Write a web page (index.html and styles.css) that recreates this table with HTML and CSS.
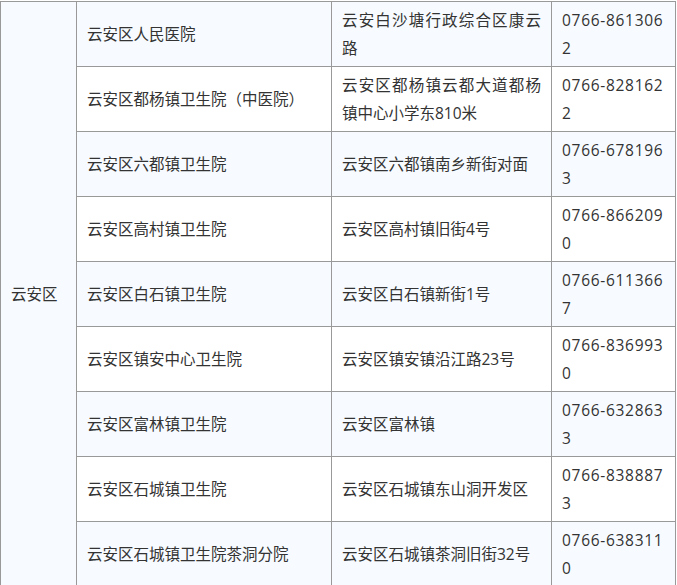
FILE: index.html
```html
<!DOCTYPE html>
<html lang="zh-CN">
<head>
<meta charset="utf-8">
<title>云安区医院列表</title>
<link rel="stylesheet" href="styles.css">
</head>
<body>
<table class="hosp">
  <colgroup>
    <col class="c-area">
    <col class="c-name">
    <col class="c-addr">
    <col class="c-tel">
  </colgroup>
  <tbody>
    <tr class="odd">
      <td class="area" rowspan="9">云安区</td>
      <td>云安区人民医院</td>
      <td class="addr">云安白沙塘行政综合区康云路</td>
      <td class="tel">0766-8613062</td>
    </tr>
    <tr>
      <td>云安区都杨镇卫生院（中医院）</td>
      <td class="addr">云安区都杨镇云都大道都杨镇中心小学东810米</td>
      <td class="tel">0766-8281622</td>
    </tr>
    <tr class="odd">
      <td>云安区六都镇卫生院</td>
      <td class="addr">云安区六都镇南乡新街对面</td>
      <td class="tel">0766-6781963</td>
    </tr>
    <tr>
      <td>云安区高村镇卫生院</td>
      <td class="addr">云安区高村镇旧街4号</td>
      <td class="tel">0766-8662090</td>
    </tr>
    <tr class="odd">
      <td>云安区白石镇卫生院</td>
      <td class="addr">云安区白石镇新街1号</td>
      <td class="tel">0766-6113667</td>
    </tr>
    <tr>
      <td>云安区镇安中心卫生院</td>
      <td class="addr">云安区镇安镇沿江路23号</td>
      <td class="tel">0766-8369930</td>
    </tr>
    <tr class="odd">
      <td>云安区富林镇卫生院</td>
      <td class="addr">云安区富林镇</td>
      <td class="tel">0766-6328633</td>
    </tr>
    <tr>
      <td>云安区石城镇卫生院</td>
      <td class="addr">云安区石城镇东山洞开发区</td>
      <td class="tel">0766-8388873</td>
    </tr>
    <tr class="odd">
      <td>云安区石城镇卫生院茶洞分院</td>
      <td class="addr">云安区石城镇茶洞旧街32号</td>
      <td class="tel">0766-6383110</td>
    </tr>
  </tbody>
</table>
</body>
</html>
```
FILE: styles.css
```css
html, body {
  margin: 0;
  padding: 0;
  background: #ffffff;
}
body {
  padding-top: 1px;
  font-family: "Open Sans", "Noto Sans CJK SC", "Microsoft YaHei", sans-serif;
  font-size: 15.5px;
  color: #333333;
}
.hosp {
  border-collapse: collapse;
  table-layout: fixed;
  width: 676px;
}
.c-area { width: 76px; }
.c-name { width: 255px; }
.c-addr { width: 220px; }
.c-tel { width: 124px; }
.hosp td {
  border: 1px solid #999999;
  padding: 4px 10px;
  line-height: 28px;
  vertical-align: middle;
  text-align: left;
  word-break: break-all;
  background: #ffffff;
}
.hosp tr.odd td {
  background: #f7fbff;
}
.hosp td.addr {
  text-align: justify;
}
.hosp td.tel {
  letter-spacing: 0.7px;
}
.hosp td.area {
  background: #f7fbff;
}
```
